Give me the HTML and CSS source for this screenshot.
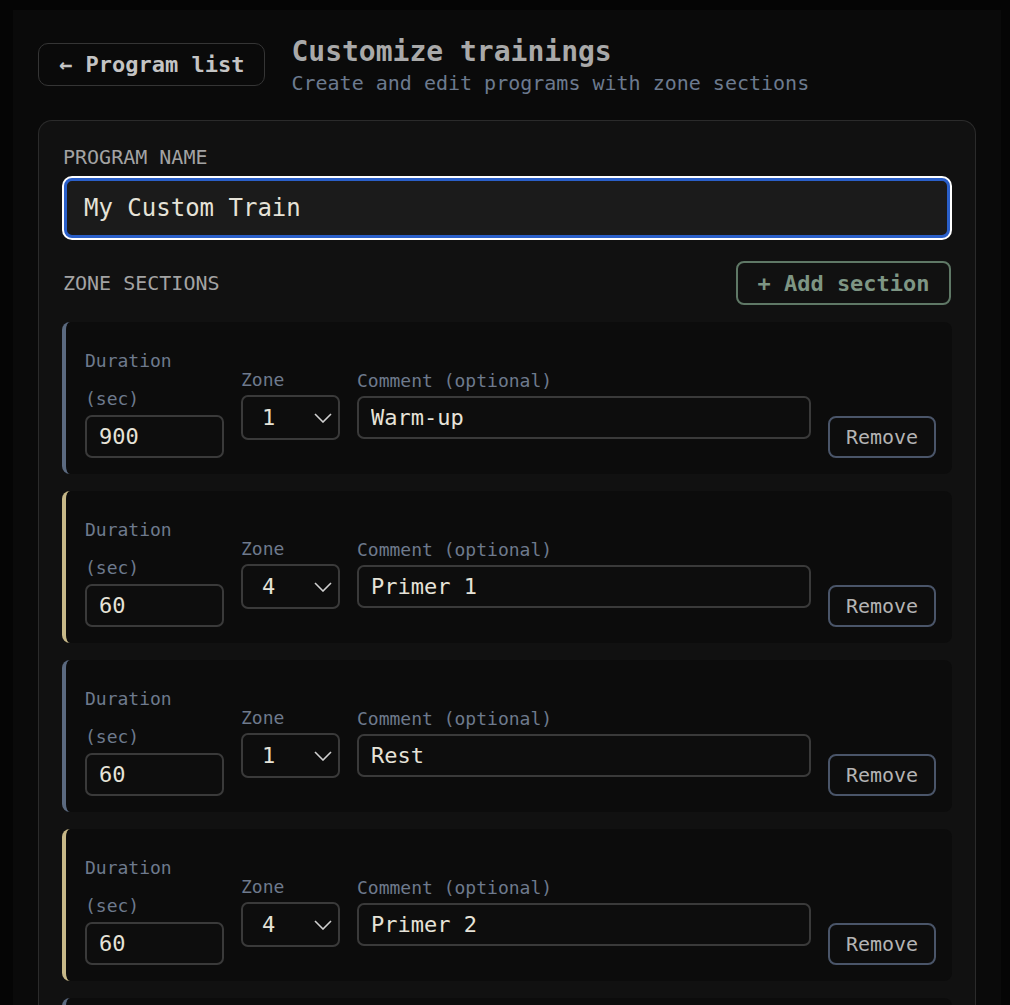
FILE: index.html
```html
<html>
<head>
    <meta charset="UTF-8">
    <meta name="viewport" content="width=device-width, initial-scale=1.0">
    <title>Customize trainings</title>
    <link rel="stylesheet" href="styles.css">
</head>
<body>
<div class="page">
    <div class="header">
        <button class="backbutton">&larr; Program list</button>
        <div class="titles">
            <h1>Customize trainings</h1>
            <p>Create and edit programs with zone sections</p>
        </div>
    </div>

    <div class="panel">
        <div class="caption">PROGRAM NAME</div>
        <input class="nameinput" type="text" value="My Custom Train">

        <div class="sectionbar">
            <div class="caption">ZONE SECTIONS</div>
            <button class="addbutton">+ Add section</button>
        </div>

        <div id="sections" class="sections"></div>
    </div>
</div>

<template id="sectiontpl">
    <div class="section">
        <div class="field durfield">
            <div class="label durlabel"><span>Duration</span><span>(sec)</span></div>
            <input class="box dur" type="text">
        </div>
        <div class="field zonefield">
            <div class="label">Zone</div>
            <div class="selectwrap">
                <select class="box zone">
                    <option>1</option><option>2</option><option>3</option><option>4</option><option>5</option>
                </select>
                <svg class="chevron" width="18" height="10" viewBox="0 0 18 10"><path d="M1 1 L9 9 L17 1" fill="none" stroke="#d0d0d0" stroke-width="1.6"/></svg>
            </div>
        </div>
        <div class="field commentfield">
            <div class="label">Comment (optional)</div>
            <input class="box comment" type="text">
        </div>
        <button class="removebutton">Remove</button>
    </div>
</template>

<script>
    var sections = [
        {dur: 900, zone: 1, comment: "Warm-up"},
        {dur: 60, zone: 4, comment: "Primer 1"},
        {dur: 60, zone: 1, comment: "Rest"},
        {dur: 60, zone: 4, comment: "Primer 2"},
        {dur: 60, zone: 1, comment: "Rest"}
    ];
    function render(){
        var box = document.getElementById("sections");
        var tpl = document.getElementById("sectiontpl");
        box.innerHTML = "";
        for (var i = 0; i < sections.length; i++) {
            var s = sections[i];
            var node = tpl.content.firstElementChild.cloneNode(true);
            node.classList.add("zone" + s.zone);
            node.querySelector(".dur").value = s.dur;
            node.querySelector(".zone").value = String(s.zone);
            node.querySelector(".comment").value = s.comment;
            box.appendChild(node);
        }
    }
    render();
</script>
</body>
</html>
```

FILE: styles.css
```css
body{
    margin: 0;
    background: #050505;
    font-family: "DejaVu Sans Mono", monospace;
}
.page{
    margin: 10px 9px 0 13px;
    padding: 33px 25px 0 25px;
    background: #0a0a0a;
    min-height: 995px;
    box-sizing: border-box;
}
.header{
    display: flex;
    align-items: flex-start;
    gap: 26px;
}
.backbutton{
    font-family: inherit;
    font-size: 22px;
    font-weight: bold;
    color: #c4c4c4;
    background: transparent;
    border: 1px solid #353535;
    border-radius: 10px;
    height: 43px;
    padding: 0 20px;
}
.titles h1{
    margin: -9px 0 0 0;
    font-size: 28px;
    line-height: 36px;
    color: #a9a9a9;
}
.titles p{
    margin: 0;
    font-size: 20px;
    line-height: 26px;
    color: #6c7a8f;
}
.panel{
    margin-top: 24px;
    background: #111111;
    border: 1px solid #2b2b2b;
    border-bottom: none;
    border-radius: 14px 14px 0 0;
    padding: 24px 23px 0 23px;
}
.caption{
    font-size: 20px;
    line-height: 24px;
    color: #a3a3a3;
    padding-left: 1px;
}
.nameinput{
    display: block;
    box-sizing: border-box;
    width: calc(100% - 4px);
    margin: 9px 2px 0 2px;
    height: 60px;
    background: #1b1b1b;
    border: 3px solid #2a5fc9;
    border-radius: 8px;
    box-shadow: 0 0 0 2px #ffffff;
    padding: 0 17px;
    font-family: inherit;
    font-size: 24px;
    color: #e6e3d8;
    outline: none;
}
.sectionbar{
    margin-top: 23px;
    display: flex;
    justify-content: space-between;
    align-items: center;
}
.addbutton{
    font-family: inherit;
    font-size: 22px;
    font-weight: bold;
    color: #7e9684;
    background: transparent;
    border: 2px solid #5f7866;
    border-radius: 8px;
    height: 44px;
    width: 215px;
    margin-right: 1px;
}
.sections{
    margin-top: 17px;
    display: flex;
    flex-direction: column;
    gap: 17px;
}
.section{
    display: flex;
    align-items: center;
    gap: 17px;
    background: #0c0c0c;
    border-left: 4px solid #5b6a80;
    border-radius: 8px;
    padding: 28px 16px 16px 19px;
}
.section.zone4{
    border-left-color: #c7b888;
}
.field{
    display: flex;
    flex-direction: column;
    gap: 4px;
}
.durfield{
    width: 139px;
    gap: 5px;
}
.zonefield{
    width: 99px;
}
.commentfield{
    flex: 1;
}
.label{
    font-size: 18px;
    line-height: 22px;
    color: #6e7a8d;
}
.durlabel{
    display: flex;
    flex-wrap: wrap;
    column-gap: 11px;
    row-gap: 16px;
}
.box{
    box-sizing: border-box;
    height: 43px;
    width: 100%;
    background: #0d0d0d;
    border: 2px solid #3a3a3a;
    border-radius: 7px;
    padding: 0 12px;
    font-family: inherit;
    font-size: 22px;
    color: #e6e3d8;
    outline: none;
}
.selectwrap{
    position: relative;
}
.zone{
    height: 45px;
    appearance: none;
    -webkit-appearance: none;
    padding-left: 19px;
}
.chevron{
    position: absolute;
    right: 8px;
    top: 18px;
    pointer-events: none;
}
.removebutton{
    align-self: flex-end;
    font-family: inherit;
    font-size: 20px;
    color: #b4b4b4;
    background: #0d0d0d;
    border: 2px solid #4a5569;
    border-radius: 8px;
    height: 42px;
    width: 108px;
    padding: 0;
}
```
